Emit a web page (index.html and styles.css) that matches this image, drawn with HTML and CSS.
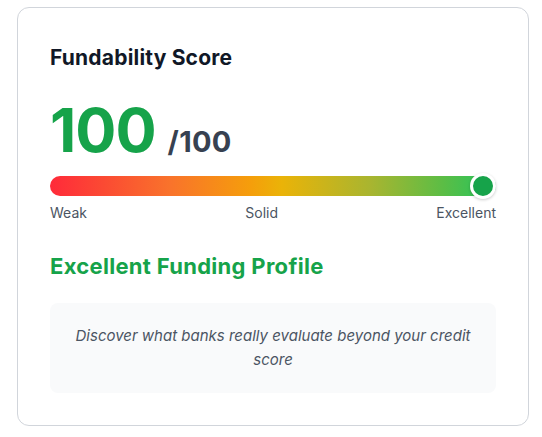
FILE: index.html
```html
<!DOCTYPE html>
<html lang="en">
<head>
<meta charset="utf-8">
<title>Fundability Score</title>
<link rel="stylesheet" href="styles.css">
</head>
<body>
  <div class="card">
    <h2 class="title">Fundability Score</h2>
    <div class="score">
      <span class="score-value">100</span>
      <span class="score-max">/100</span>
    </div>
    <div class="meter">
      <div class="meter-track"></div>
      <div class="meter-knob" style="left: 100%;"></div>
    </div>
    <div class="meter-labels">
      <span>Weak</span>
      <span>Solid</span>
      <span>Excellent</span>
    </div>
    <h3 class="status">Excellent Funding Profile</h3>
    <div class="note">
      <p>Discover what banks really evaluate beyond your credit score</p>
    </div>
  </div>
</body>
</html>
```

FILE: styles.css
```css
* { box-sizing: border-box; }
html, body { background: #ffffff; }
body {
  margin: 0;
  padding: 7px 0 0 17px;
  font-family: Inter, "Liberation Sans", sans-serif;
  color: #111827;
}
.card {
  width: 512px;
  border: 1px solid #d1d5db;
  border-radius: 12px;
  padding: 36px 32px 32px 32px;
  background: #fff;
}
.title {
  margin: 0;
  font-size: 21px;
  line-height: 28px;
  font-weight: 700;
  letter-spacing: 0.2px;
  color: #111827;
}
.score {
  display: flex;
  align-items: baseline;
  margin-top: 28px;
  height: 60px;
}
.score-value {
  font-size: 61px;
  line-height: 60px;
  font-weight: 700;
  color: #16a34a;
  letter-spacing: -1px;
}
.score-max {
  margin-left: 12px;
  font-size: 29px;
  line-height: 32px;
  font-weight: 700;
  letter-spacing: 0.3px;
  color: #374151;
}
.meter {
  position: relative;
  margin-top: 16px;
  height: 20px;
}
.meter-track {
  height: 20px;
  border-radius: 10px;
  background: linear-gradient(to right, #ff2a3a 0%, #fb4a33 12%, #f9732b 27%, #f59e0b 45%, #eab308 52%, #a8b530 72%, #5cbd45 88%, #22c55e 100%);
}
.meter-knob {
  position: absolute;
  top: 50%;
  width: 26px;
  height: 26px;
  border-radius: 50%;
  background: #16a34a;
  border: 3px solid #ffffff;
  box-shadow: 0 1px 3px rgba(0, 0, 0, 0.2);
  transform: translate(-100%, -50%);
}
.meter-labels {
  display: flex;
  justify-content: space-between;
  margin-top: 7px;
  font-size: 14px;
  line-height: 20px;
  color: #4b5563;
}
.status {
  margin: 29px 0 0 0;
  font-size: 22px;
  line-height: 28px;
  font-weight: 700;
  letter-spacing: 0.3px;
  color: #16a34a;
}
.note {
  margin-top: 23px;
  background: #f9fafb;
  border-radius: 8px;
  padding: 21px 24px;
  text-align: center;
}
.note p {
  margin: 0;
  font-size: 15px;
  line-height: 24px;
  font-style: italic;
  color: #4b5563;
}
```
